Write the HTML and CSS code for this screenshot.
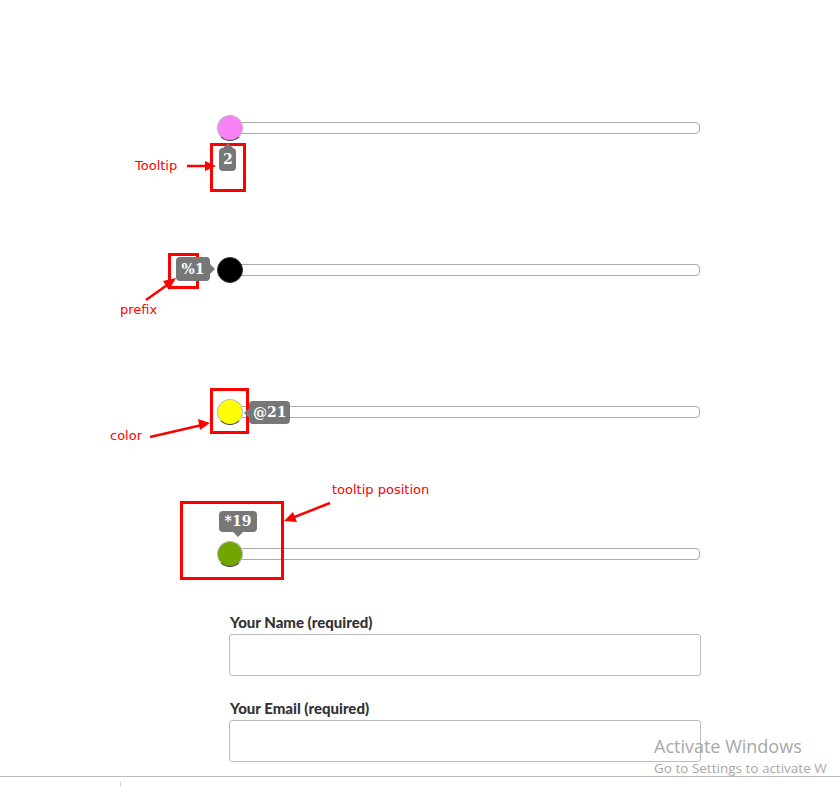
FILE: index.html
```html
<!DOCTYPE html>
<html>
<head>
<meta charset="utf-8">
<link rel="stylesheet" href="styles.css">
</head>
<body>
<div class="page">
  <div class="sliders">
    <div class="slider">
      <span class="handle pink"></span>
      <span class="tip tip-bottom">2</span>
    </div>
    <div class="slider">
      <span class="handle black"></span>
      <span class="tip tip-left">%1</span>
    </div>
    <div class="slider">
      <span class="tip tip-right">@21</span>
      <span class="handle yellow"></span>
    </div>
    <div class="slider">
      <span class="handle green"></span>
      <span class="tip tip-top">*19</span>
    </div>
  </div>

  <form class="form">
    <label class="field">
      <span class="label">Your Name (required)</span>
      <span class="input"></span>
    </label>
    <label class="field">
      <span class="label">Your Email (required)</span>
      <span class="input"></span>
    </label>
  </form>
  <div class="rule"><span class="tick"></span></div>

  <div class="notes">
    <span class="box b1"></span>
    <span class="box b2"></span>
    <span class="box b3"></span>
    <span class="box b4"></span>
    <span class="note n1">Tooltip</span>
    <span class="note n2">prefix</span>
    <span class="note n3">color</span>
    <span class="note n4">tooltip position</span>
    <svg class="arrows" width="840" height="786" viewBox="0 0 840 786">
      <g stroke="#f00" stroke-width="2.5" fill="#f00">
        <line x1="187" y1="166" x2="208" y2="166"/>
        <polygon points="216,166 205,161 205,171" stroke="none"/>
        <line x1="146" y1="300" x2="170" y2="283"/>
        <polygon points="176,278 163,281 169,290" stroke="none"/>
        <line x1="150" y1="437" x2="202" y2="425"/>
        <polygon points="210,423 198,419 200,430" stroke="none"/>
        <line x1="330" y1="503" x2="292" y2="518"/>
        <polygon points="284,521 293,512 297,522" stroke="none"/>
      </g>
    </svg>
  </div>

  <div class="watermark">
    <div class="wm1">Activate Windows</div>
    <div class="wm2">Go to Settings to activate W</div>
  </div>
</div>
</body>
</html>
```

FILE: styles.css
```css
html, body {
  margin: 0;
  padding: 0;
  background: #fff;
}
.page {
  position: relative;
  width: 840px;
  height: 786px;
  overflow: hidden;
}
.sliders {
  padding-top: 122px;
  display: flex;
  flex-direction: column;
  gap: 130px;
}
.slider {
  position: relative;
  margin-left: 230px;
  width: 470px;
  height: 12px;
  box-sizing: border-box;
  border: 1px solid #aaa;
  border-radius: 4px;
  background: #fff;
}
.handle {
  position: absolute;
  left: -14px;
  top: -8px;
  width: 26px;
  height: 26px;
  box-sizing: border-box;
  border-radius: 50%;
  border: 1px solid #bbb;
  border-bottom-color: #444;
  z-index: 2;
}
.pink { background: #f782f5; }
.black { background: #000; border-color: #333; }
.yellow { background: #ffff00; }
.green { background: #72a500; }

.tip {
  position: absolute;
  height: 23px;
  line-height: 23px;
  padding: 0 4px;
  background: #777;
  color: #fff;
  font-family: "DejaVu Serif", "Liberation Serif", serif;
  font-weight: bold;
  font-size: 14px;
  border-radius: 4px;
  white-space: nowrap;
  z-index: 1;
  text-align: center;
}
.tip::after {
  content: "";
  position: absolute;
  border: 5px solid transparent;
}
.tip-bottom {
  left: -12px;
  top: 25px;
  width: 9px;
}
.tip-bottom::after {
  left: 50%;
  margin-left: -5px;
  top: -10px;
  border-bottom-color: #777;
}
.tip-left {
  left: -55px;
  top: -8px;
  height: 24px;
  line-height: 24px;
  width: 26px;
}
.tip-left::after {
  right: -10px;
  top: 7px;
  border-left-color: #777;
}
.tip-right {
  left: 18px;
  top: -6px;
  width: 33px;
}
.tip-right::after {
  left: -10px;
  top: 7px;
  border-right-color: #777;
}
.tip-top {
  left: -12px;
  top: -38px;
  height: 21px;
  line-height: 21px;
  width: 30px;
}
.tip-top::after {
  left: 50%;
  margin-left: -5px;
  bottom: -10px;
  border-top-color: #777;
}

.form {
  margin: 53px 0 0 229px;
  width: 472px;
  display: flex;
  flex-direction: column;
  gap: 23px;
}
.field {
  display: flex;
  flex-direction: column;
  gap: 2px;
}
.label {
  font-family: Lato, "Liberation Sans", sans-serif;
  font-weight: 900;
  font-size: 15px;
  line-height: 19px;
  color: #333;
  padding-left: 1px;
}
.input {
  display: block;
  height: 42px;
  box-sizing: border-box;
  border: 1px solid #bbb;
  border-radius: 3px;
  background: #fff;
}
.rule {
  position: relative;
  margin-top: 14px;
  height: 1px;
  background: #bbb;
}
.tick {
  position: absolute;
  left: 120px;
  top: 6px;
  width: 1px;
  height: 5px;
  background: #ccc;
}

.notes {
  position: absolute;
  inset: 0;
  pointer-events: none;
}
.arrows {
  position: absolute;
  left: 0;
  top: 0;
}
.box {
  position: absolute;
  box-sizing: border-box;
  border: 3px solid #f00;
}
.b1 { left: 210px; top: 143px; width: 36px; height: 49px; }
.b2 { left: 168px; top: 253px; width: 31px; height: 36px; }
.b3 { left: 210px; top: 388px; width: 39px; height: 46px; }
.b4 { left: 180px; top: 501px; width: 104px; height: 79px; }
.note {
  position: absolute;
  color: #f00;
  font-family: "DejaVu Sans", Verdana, sans-serif;
  font-size: 13px;
  line-height: 15px;
  white-space: nowrap;
}
.n1 { left: 135px; top: 158px; }
.n2 { left: 120px; top: 302px; }
.n3 { left: 110px; top: 428px; }
.n4 { left: 332px; top: 482px; }

.watermark {
  position: absolute;
  left: 654px;
  top: 734px;
  color: #a8a8a8;
  font-family: "Open Sans", "Noto Sans", sans-serif;
  white-space: nowrap;
  pointer-events: none;
}
.wm1 {
  font-size: 18px;
  line-height: 24px;
}
.wm2 {
  font-size: 13.5px;
  line-height: 20px;
}
```
